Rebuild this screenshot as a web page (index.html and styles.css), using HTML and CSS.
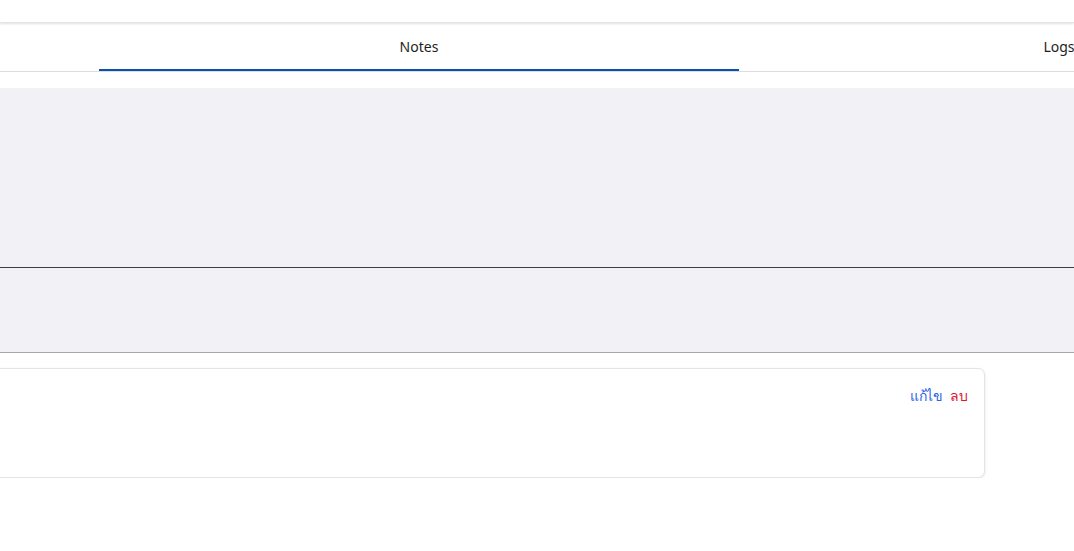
FILE: index.html
```html
<!DOCTYPE html>
<html>
<head>
<meta charset="utf-8">
<link rel="stylesheet" href="styles.css">
</head>
<body>
<div class="top"></div>
<div class="tabs">
  <div class="tab"></div>
  <div class="tab active">Notes</div>
  <div class="tab">Logs</div>
</div>
<div class="form">
  <div class="field field-main"></div>
  <div class="field field-second"></div>
</div>
<div class="card">
  <div class="actions">
    <span class="edit">แก้ไข</span>
    <span class="del">ลบ</span>
  </div>
</div>
</body>
</html>
```
FILE: styles.css
```css
html, body {
  margin: 0;
  padding: 0;
  background: #ffffff;
  overflow: hidden;
  font-family: "Noto Sans", "Open Sans", sans-serif;
}
.top {
  height: 22px;
  background: #ffffff;
  box-shadow: 0 1px 2px rgba(0,0,0,0.12);
  position: relative;
  z-index: 1;
  border-bottom: 1px solid #e4e4e8;
}
.tabs {
  display: flex;
  height: 48px;
  border-bottom: 1px solid #dcdce2;
  margin-left: -541px;
  width: 2000px;
}
.tab {
  flex: 0 0 640px;
  display: flex;
  align-items: center;
  justify-content: center;
  font-size: 14px;
  color: #1e1e22;
  box-sizing: border-box;
}
.tab.active {
  border-bottom: 2px solid #0a50b0;
  padding-top: 0;
}
.tab:not(.active) {
  padding-bottom: 2px;
}
.form {
  margin-top: 16px;
  background: #f1f1f6;
}
.field-main {
  height: 179px;
  border-bottom: 1px solid #3c3c42;
}
.field-second {
  height: 84px;
  border-bottom: 1px solid #a8a8ac;
}
.card {
  margin: 15px 89px 0 -20px;
  height: 110px;
  border: 1px solid #e3e3e9;
  border-radius: 7px;
  box-shadow: 0 1px 3px rgba(0,0,0,0.1);
  background: #fff;
  box-sizing: border-box;
  padding: 17px 16px 0 0;
}
.actions {
  display: flex;
  justify-content: flex-end;
  gap: 8px;
  font-size: 14px;
  line-height: 20px;
  font-weight: 500;
}
.edit { color: #2d5fe8; letter-spacing: -0.6px; }
.del { color: #e0102f; }
```
